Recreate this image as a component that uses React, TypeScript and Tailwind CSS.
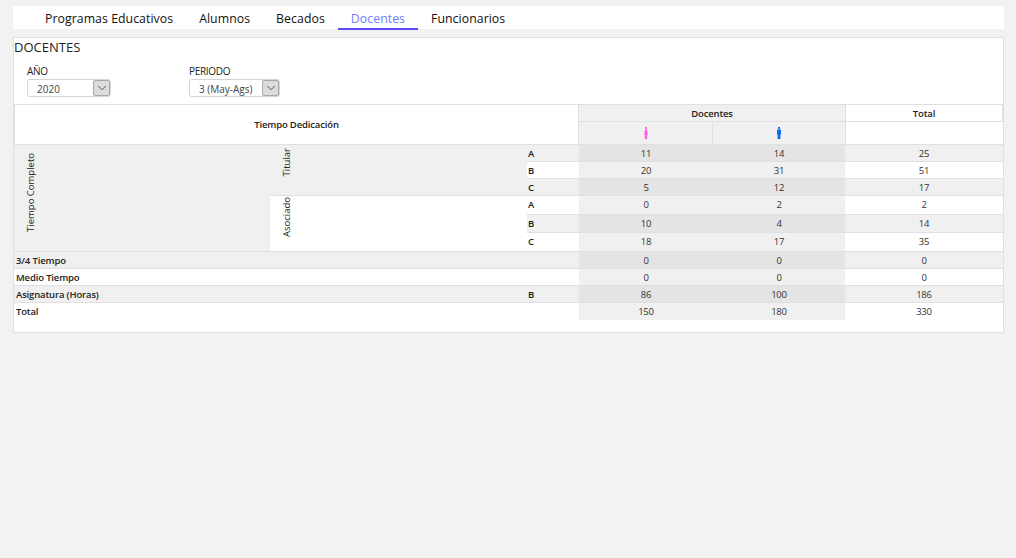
import { ChevronDown } from "lucide-react";

const tabs = ["Programas Educativos", "Alumnos", "Becados", "Docentes", "Funcionarios"];

function FemaleIcon() {
  return (
    <svg width="6" height="12" viewBox="0 0 6 12" className="mx-auto block" fill="#ff5cf0">
      <rect x="2" y="0" width="2" height="2" />
      <path d="M2 2.5h2l.4 2.5.6 2.5H4.2V12H1.8V7.5H1L1.6 5z" />
    </svg>
  );
}

function MaleIcon() {
  return (
    <svg width="6" height="12" viewBox="0 0 6 12" className="mx-auto block" fill="#0a6cf5">
      <rect x="2" y="0" width="2" height="2" />
      <path d="M1 2.5h4V7.5H4.4V12H1.6V7.5H1z" />
    </svg>
  );
}

function Select({ value, width, label }: { value: string; width: string; label: string }) {
  return (
    <div className="w-[162px]">
      <div className="text-[10px] leading-[13px] tracking-[-0.3px] text-[#222]">{label}</div>
      <div className={`${width} mt-[1px] flex h-[18px] items-stretch rounded-[3px] border border-[#d5d5d5] bg-white`}>
        <div className="flex-1 pl-[9px] text-[10px] leading-[18px] text-[#444]">{value}</div>
        <div className="flex w-[17px] items-center justify-center rounded-[2px] border border-[#a8a8a8] bg-[#dcdcdc]">
          <ChevronDown size={14} strokeWidth={1.5} className="text-[#444]" />
        </div>
      </div>
    </div>
  );
}

type Row = {
  sub: string;
  subBg: string;
  m: number;
  h: number;
  t: number;
  height: string;
  dataDark: boolean;
  totalBg: string;
};

const titular: Row[] = [
  { sub: "A", subBg: "bg-[#f0f0f0]", m: 11, h: 14, t: 25, height: "h-[17px] pt-[1px]", dataDark: true, totalBg: "bg-[#f0f0f0]" },
  { sub: "B", subBg: "bg-white", m: 20, h: 31, t: 51, height: "h-[17px] pt-[1px]", dataDark: false, totalBg: "bg-white" },
  { sub: "C", subBg: "bg-[#f0f0f0]", m: 5, h: 12, t: 17, height: "h-[17px] pt-[1px]", dataDark: true, totalBg: "bg-[#f0f0f0]" },
];

const asociado: Row[] = [
  { sub: "A", subBg: "bg-white", m: 0, h: 2, t: 2, height: "h-[19px]", dataDark: false, totalBg: "bg-white" },
  { sub: "B", subBg: "bg-[#f0f0f0]", m: 10, h: 4, t: 14, height: "h-[18px]", dataDark: true, totalBg: "bg-[#f0f0f0]" },
  { sub: "C", subBg: "bg-white", m: 18, h: 17, t: 35, height: "h-[19px]", dataDark: false, totalBg: "bg-white" },
];

const line = "border-b border-[#e0e0e0]";
const num = "p-0 text-center text-[9.5px] font-normal leading-none tracking-[-0.2px] text-[#333]";
const strong = "p-0 text-[9.5px] font-semibold leading-none tracking-[-0.15px] text-[#222]";
const turned = "rotate-180 text-center text-[9.5px] leading-none text-[#222] [writing-mode:vertical-rl]";

function Cells({ r }: { r: Row }) {
  const dataBg = r.dataDark ? "bg-[#e4e4e4]" : "bg-[#f0f0f0]";
  return (
    <>
      <td className={`${line} ${r.subBg} ${strong} ${r.height} pl-[1px]`}>{r.sub}</td>
      <td className={`${line} ${dataBg} ${num} ${r.height}`}>{r.m}</td>
      <td className={`${line} ${dataBg} ${num} ${r.height}`}>{r.h}</td>
      <td className={`${line} ${r.totalBg} ${num} ${r.height}`}>{r.t}</td>
    </>
  );
}

function PlainRow({ label, sub, m, h, t, shaded }: { label: string; sub?: string; m: number; h: number; t: number; shaded: boolean }) {
  const bg = shaded ? "bg-[#f0f0f0]" : "bg-white";
  const dataBg = shaded ? "bg-[#e4e4e4]" : "bg-[#f0f0f0]";
  return (
    <tr>
      <td colSpan={2} className={`${line} ${bg} ${strong} h-[17px] pl-[2px] pt-[1px]`}>{label}</td>
      <td className={`${line} ${bg} ${strong} pl-[1px] pt-[1px]`}>{sub}</td>
      <td className={`${line} ${dataBg} ${num} pt-[1px]`}>{m}</td>
      <td className={`${line} ${dataBg} ${num} pt-[1px]`}>{h}</td>
      <td className={`${line} ${bg} ${num} pt-[1px]`}>{t}</td>
    </tr>
  );
}

export default function App() {
  return (
    <div className="min-h-screen bg-[#f2f2f2] pl-[13px] pr-[12px] pt-[6px]" style={{ fontFamily: "'Open Sans', sans-serif" }}>
      {/* tabs */}
      <div className="flex h-[23px] bg-white pl-[19px]">
        {tabs.map((tab) => (
          <div
            key={tab}
            className={`relative px-[13px] text-[12.3px] leading-[25px] tracking-[0.05px] ${
              tab === "Docentes" ? "text-[#6f80ff]" : "text-[#111]"
            }`}
          >
            {tab}
            {tab === "Docentes" && <div className="absolute inset-x-0 bottom-[-1px] h-[2px] bg-[#5a4bff]" />}
          </div>
        ))}
      </div>

      {/* panel */}
      <div className="mt-[8px] h-[296px] border border-[#e0e0e0] bg-white">
        <div className="pt-[1px] text-[13px] leading-[17px] text-[#222]">DOCENTES</div>
        <div className="mt-[9px] flex h-[39px] pl-[13px]">
          <Select label="AÑO" value="2020" width="w-[84px]" />
          <Select label="PERIODO" value="3 (May-Ags)" width="w-[91px]" />
        </div>

        <table className="w-[989px] table-fixed border-separate border-spacing-0">
          <colgroup>
            <col className="w-[256px]" />
            <col className="w-[257px]" />
            <col className="w-[52px]" />
            <col className="w-[134px]" />
            <col className="w-[132px]" />
            <col className="w-[158px]" />
          </colgroup>
          <tbody>
            <tr>
              <th colSpan={3} rowSpan={2} className={`${line} ${strong} border-t border-l border-r text-center`}>
                Tiempo Dedicación
              </th>
              <th colSpan={2} className={`${line} ${strong} h-[18px] border-t bg-[#f0f0f0] pt-[1px] text-center`}>
                Docentes
              </th>
              <th className={`${line} ${strong} border-t border-l border-r pt-[1px] text-center`}>Total</th>
            </tr>
            <tr>
              <td className={`${line} h-[23px] border-r bg-[#f0f0f0] p-0`}>
                <FemaleIcon />
              </td>
              <td className={`${line} bg-[#f0f0f0] p-0`}>
                <MaleIcon />
              </td>
              <td className={`${line} border-l p-0`} />
            </tr>

            {titular.map((r, i) => (
              <tr key={`t${r.sub}`}>
                {i === 0 && (
                  <td rowSpan={6} className={`${line} bg-[#f0f0f0] p-0 pb-[12px] pl-[12px]`}>
                    <div className={turned}>Tiempo Completo</div>
                  </td>
                )}
                {i === 0 && (
                  <td rowSpan={3} className={`${line} bg-[#f0f0f0] p-0 pb-[15px] pl-[12px]`}>
                    <div className={turned}>Titular</div>
                  </td>
                )}
                <Cells r={r} />
              </tr>
            ))}
            {asociado.map((r, i) => (
              <tr key={`a${r.sub}`}>
                {i === 0 && (
                  <td rowSpan={3} className={`${line} bg-white p-0 pb-[13px] pl-[12px]`}>
                    <div className={turned}>Asociado</div>
                  </td>
                )}
                <Cells r={r} />
              </tr>
            ))}

            <PlainRow label="3/4 Tiempo" m={0} h={0} t={0} shaded />
            <PlainRow label="Medio Tiempo" m={0} h={0} t={0} shaded={false} />
            <PlainRow label="Asignatura (Horas)" sub="B" m={86} h={100} t={186} shaded />
            <tr>
              <td colSpan={3} className={`${strong} h-[17px] pl-[2px]`}>Total</td>
              <td className={`bg-[#f0f0f0] ${num}`}>150</td>
              <td className={`bg-[#f0f0f0] ${num}`}>180</td>
              <td className={num}>330</td>
            </tr>
          </tbody>
        </table>
      </div>
    </div>
  );
}
